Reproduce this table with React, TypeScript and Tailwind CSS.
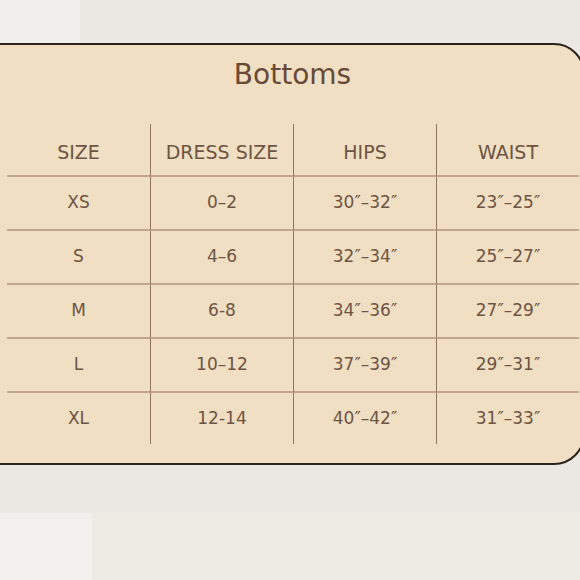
import React from "react";

const rows = [
  ["XS", "0–2", "30″–32″", "23″–25″"],
  ["S", "4–6", "32″–34″", "25″–27″"],
  ["M", "6-8", "34″–36″", "27″–29″"],
  ["L", "10–12", "37″–39″", "29″–31″"],
  ["XL", "12-14", "40″–42″", "31″–33″"],
];

export default function App() {
  const font = { fontFamily: "'DejaVu Sans', 'Noto Sans', sans-serif" };
  return (
    <div className="w-[580px] h-[580px] overflow-hidden bg-[#ece9e4] flex flex-col" style={font}>
      <div className="h-[43px] flex shrink-0">
        <div className="w-[80px] bg-[#f1efeb]" />
        <div className="flex-1 bg-[#ebe8e3]" />
      </div>
      <div className="flex shrink-0 h-[422px] overflow-hidden">
        <div className="ml-[-20px] w-[605px] min-w-[605px] h-[422px] shrink-0 border-2 border-[#2a221d] rounded-r-[31px] bg-[#f0dfc3] flex flex-col">
          <div className="mt-[13px] h-[34px] flex justify-center pl-[20px] text-[28px] leading-[34px] text-[#684836]">
            Bottoms
          </div>
          <div className="mt-[32px] ml-[25px] w-[572px] grid grid-cols-4 text-[#6e5444]">
            {["SIZE", "DRESS SIZE", "HIPS", "WAIST"].map((h, i) => (
              <div
                key={h}
                className={`h-[53px] pt-[5px] flex items-center justify-center text-[19px] border-b-2 border-b-[#c2a68c] ${i > 0 ? "border-l-[1.5px] border-l-[#8e7361]" : ""}`}
              >
                {h}
              </div>
            ))}
            {rows.map((r, ri) =>
              r.map((c, ci) => (
                <div
                  key={ri + "-" + ci}
                  className={`${ri === rows.length - 1 ? "h-[51px]" : "h-[54px] border-b-2 border-b-[#c2a68c]"} flex items-center justify-center text-[17px] ${ci > 0 ? "border-l-[1.5px] border-l-[#8e7361]" : ""}`}
                >
                  {c}
                </div>
              ))
            )}
          </div>
        </div>
      </div>
      <div className="h-[48px] shrink-0 bg-[#ebe8e3]" />
      <div className="flex-1 flex">
        <div className="w-[92px] bg-[#f2f0ec]" />
        <div className="flex-1 bg-[#eeebe5]" />
      </div>
    </div>
  );
}
